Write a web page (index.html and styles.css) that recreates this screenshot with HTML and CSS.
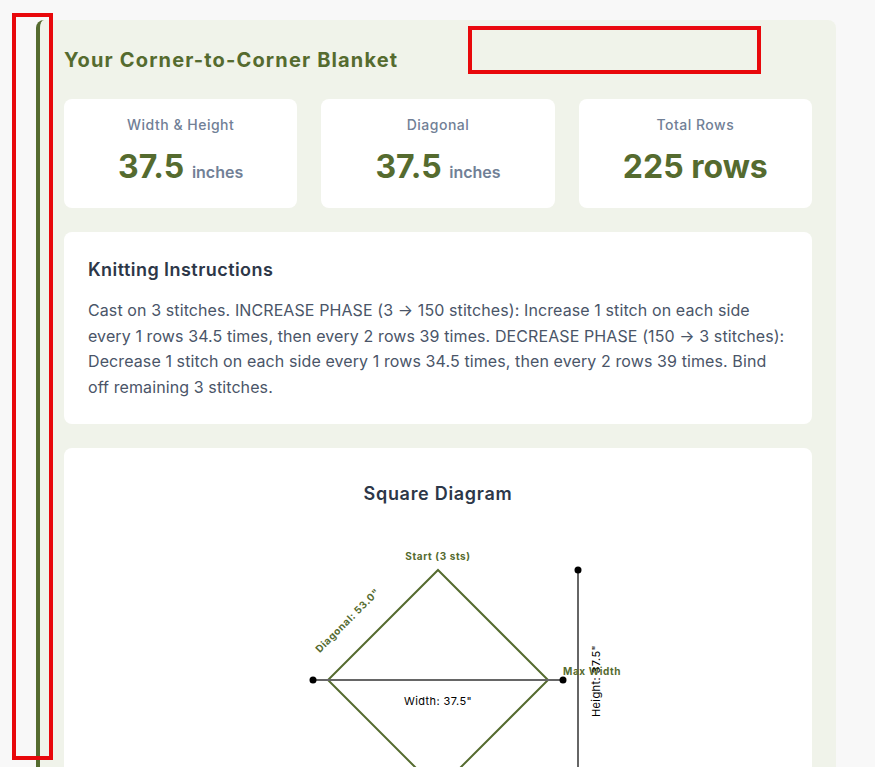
FILE: index.html
```html
<!DOCTYPE html>
<html lang="en">
<head>
<meta charset="utf-8">
<title>Corner-to-Corner Blanket</title>
<link rel="stylesheet" href="styles.css">
</head>
<body>
<div class="mark mark-left"></div>
<div class="mark mark-top"></div>
<section class="results">
  <h2 class="results-title">Your Corner-to-Corner Blanket</h2>
  <div class="stats">
    <div class="stat">
      <div class="stat-label">Width &amp; Height</div>
      <div class="stat-value">37.5 <span class="unit">inches</span></div>
    </div>
    <div class="stat">
      <div class="stat-label">Diagonal</div>
      <div class="stat-value">37.5 <span class="unit">inches</span></div>
    </div>
    <div class="stat">
      <div class="stat-label">Total Rows</div>
      <div class="stat-value">225 rows</div>
    </div>
  </div>
  <div class="card instructions">
    <h3 class="card-title">Knitting Instructions</h3>
    <p class="instr-text">Cast on 3 stitches. INCREASE PHASE (3 → 150 stitches): Increase 1 stitch on each side every 1 rows 34.5 times, then every 2 rows 39 times. DECREASE PHASE (150 → 3 stitches): Decrease 1 stitch on each side every 1 rows 34.5 times, then every 2 rows 39 times. Bind off remaining 3 stitches.</p>
  </div>
  <div class="card diagram">
    <h3 class="card-title center wide">Square Diagram</h3>
    <svg class="diagram-svg" width="400" height="300" viewBox="0 0 400 300">
      <polygon points="200,51 310,161 200,271 90,161" fill="none" stroke="#556b2f" stroke-width="2"/>
      <line x1="75" y1="161" x2="325" y2="161" stroke="#666" stroke-width="2"/>
      <circle cx="75" cy="161" r="3.5" fill="#000"/>
      <circle cx="325" cy="161" r="3.5" fill="#000"/>
      <line x1="340" y1="51" x2="340" y2="300" stroke="#666" stroke-width="2"/>
      <circle cx="340" cy="51" r="3.5" fill="#000"/>
      <text class="lbl-bold" x="200" y="41" text-anchor="middle">Start (3 sts)</text>
      <text class="lbl-bold" x="112" y="104" text-anchor="middle" transform="rotate(-45 112 104)">Diagonal: 53.0"</text>
      <text class="lbl-bold" x="325" y="156">Max Width</text>
      <text class="lbl" x="200" y="186" text-anchor="middle">Width: 37.5"</text>
      <text class="lbl" x="362" y="162" text-anchor="middle" transform="rotate(-90 362 162)">Height: 37.5"</text>
    </svg>
  </div>
</section>
</body>
</html>
```
FILE: styles.css
```css
* { box-sizing: border-box; }
html, body { margin: 0; padding: 0; }
body {
  background: #f8f8f8;
  font-family: Inter, "Open Sans", sans-serif;
  padding: 20px 39px 0 36px;
  overflow: hidden;
}
.results {
  width: 800px;
  background: #f0f3ea;
  border-left: 4px solid #556b2f;
  border-radius: 8px;
  padding: 26px 24px 24px 24px;
}
.results-title {
  margin: 0 0 25px;
  font-size: 20px;
  line-height: 28px;
  font-weight: 700;
  letter-spacing: 1.15px;
  color: #556b2f;
}
.stats {
  display: grid;
  grid-template-columns: repeat(3, 1fr);
  gap: 24px;
}
.stat {
  background: #fff;
  border-radius: 8px;
  padding: 16px 16px 21px;
  text-align: center;
}
.stat-label {
  font-size: 14px;
  line-height: 20px;
  font-weight: 500;
  letter-spacing: 0.5px;
  color: #718096;
  margin-bottom: 12px;
}
.stat-value {
  font-size: 32px;
  line-height: 40px;
  height: 40px;
  font-weight: 700;
  color: #556b2f;
}
.unit {
  font-size: 16px;
  line-height: 1;
  font-weight: 600;
  color: #718096;
}
.card {
  background: #fff;
  border-radius: 8px;
  margin-top: 24px;
}
.instructions { padding: 24px 24px 24px; }
.card-title {
  margin: 0;
  font-size: 18px;
  line-height: 27px;
  font-weight: 600;
  letter-spacing: 0.45px;
  color: #2d3748;
}
.card-title.center { text-align: center; }
.card-title.wide { letter-spacing: 0.7px; }
.instr-text {
  margin: 15px 0 0;
  font-size: 16px;
  line-height: 25.6px;
  letter-spacing: 0.1px;
  color: #4a5568;
}
.diagram {
  padding: 32px 24px 24px;
  display: flex;
  flex-direction: column;
  align-items: center;
}
.diagram-svg { display: block; margin-top: 12px; }
.lbl-bold { font-family: Inter, sans-serif; font-size: 10px; font-weight: 700; letter-spacing: 0.6px; fill: #556b2f; }
.lbl { font-family: Inter, sans-serif; font-size: 11px; letter-spacing: 0.4px; fill: #000; }
.mark {
  position: absolute;
  border: 4px solid #e8080b;
  pointer-events: none;
}
.mark-left { left: 12px; top: 13px; width: 41px; height: 747px; }
.mark-top { left: 468px; top: 26px; width: 293px; height: 48px; }
```
